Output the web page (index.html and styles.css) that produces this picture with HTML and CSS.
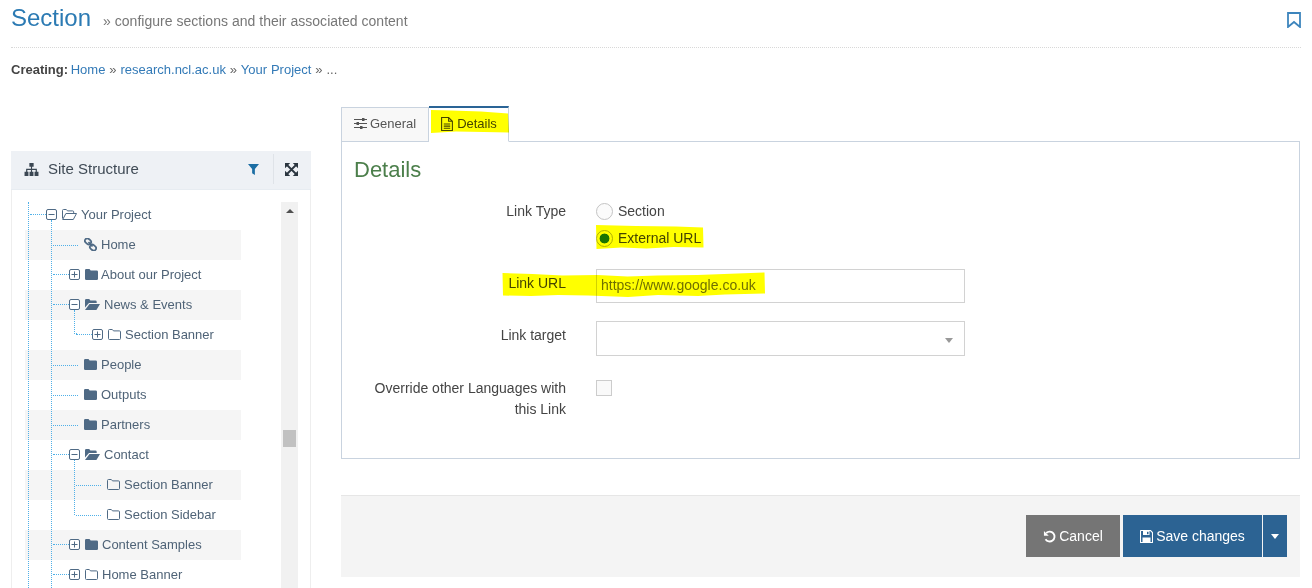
FILE: index.html
```html
<!DOCTYPE html>
<html lang="en">
<head>
<meta charset="utf-8">
<title>Section</title>
<link rel="stylesheet" href="styles.css">
</head>
<body>
<svg class="defs" width="0" height="0" aria-hidden="true">
  <symbol id="i-folder" viewBox="0 0 13 11"><path d="M1.300 0h3.200l1.200 1.400h6a1.300 1.300 0 0 1 1.300 1.300v7A1.300 1.300 0 0 1 11.700 11H1.300A1.300 1.300 0 0 1 0 9.700V1.300A1.300 1.300 0 0 1 1.300 0z" fill="currentColor"/></symbol>
  <symbol id="i-folder-o" viewBox="0 0 13 11"><path d="M1.500.5h2.800l1.200 1.400h6a1 1 0 0 1 1 1v6.600a1 1 0 0 1-1 1h-10a1 1 0 0 1-1-1V1.500a1 1 0 0 1 1-1z" fill="none" stroke="currentColor"/></symbol>
  <symbol id="i-open" viewBox="0 0 15 11"><path d="M0 8.500V1.300A1.300 1.300 0 0 1 1.300 0h2.900l1.200 1.400h5a1.300 1.300 0 0 1 1.300 1.300V4H4L0 8.500z" fill="currentColor"/><path d="M4.500 5H15l-3.600 6H0z" fill="currentColor"/></symbol>
  <symbol id="i-open-o" viewBox="0 0 15 11"><path d="M.5 9.500V1.500a1 1 0 0 1 1-1h2.800l1.200 1.400h5.200a1 1 0 0 1 1 1V4.500M.7 10.500l3.200-6H14.500l-3.200 6z" fill="none" stroke="currentColor" stroke-linejoin="round"/></symbol>
  <symbol id="i-link" viewBox="0 0 13 13"><g fill="none" stroke="currentColor" stroke-width="1.800"><rect x=".7" y="1" width="6.600" height="4.800" rx="2.400" transform="rotate(40 4 3.400)"/><rect x="5.700" y="7.200" width="6.600" height="4.800" rx="2.400" transform="rotate(40 9 9.600)"/><path d="M4.500 4l4 4.500"/></g></symbol>
  <symbol id="i-plus" viewBox="0 0 11 11"><rect x=".5" y=".5" width="10" height="10" rx="1.500" fill="#fff" stroke="currentColor"/><path d="M2.500 5.500h6M5.500 2.500v6" stroke="currentColor"/></symbol>
  <symbol id="i-minus" viewBox="0 0 11 11"><rect x=".5" y=".5" width="10" height="10" rx="1.500" fill="#fff" stroke="currentColor"/><path d="M2.500 5.500h6" stroke="currentColor"/></symbol>
</svg>

<header class="page-head">
  <h1 class="page-title">Section</h1>
  <span class="page-sub">» configure sections and their associated content</span>
  <svg class="bookmark" viewBox="0 0 14 16"><path d="M1 1h12v14L7 10l-6 5z" fill="none" stroke="currentColor" stroke-width="1.800"/></svg>
</header>

<p class="crumbs"><b>Creating:</b> <a href="#">Home</a> » <a href="#">research.ncl.ac.uk</a> » <a href="#">Your Project</a> » ...</p>

<main class="layout">
  <aside class="panel">
    <div class="panel-head">
      <svg class="ico-site" viewBox="0 0 16 14"><path d="M5.700 0h4.600v4H8.600v2.300h5.200V9.500H15.500V14h-4.200V9.500h1.200V7.500H8.600v2H10.100V14H5.900V9.500H7.400v-2H3.500v2H4.700V14H.5V9.500H2.200V6.300h5.200V4H5.700z" fill="currentColor"/></svg>
      <span class="panel-title">Site Structure</span>
      <svg class="ico-filter" viewBox="0 0 12 12"><path d="M0 0h12L7.500 5.500V12L4.500 10V5.500z" fill="currentColor"/></svg>
      <span class="panel-sep"></span>
      <svg class="ico-expand" viewBox="0 0 13 13"><path d="M0 0h5.200L0 5.200zM13 0v5.200L7.800 0zM0 13V7.800L5.200 13zM13 13H7.800L13 7.800z" fill="currentColor"/><path d="M2 2l9 9M11 2l-9 9" stroke="currentColor" stroke-width="1.800" fill="none"/></svg>
    </div>
    <div class="panel-body">
      <div class="tree">
        <span class="guide g1"></span>
        <span class="guide g2"></span>
        <span class="guide g3"></span>
        <span class="guide g4"></span>
        <ul class="tree-list">
          <li class="row d0"><i class="conn"></i><svg class="box"><use href="#i-minus"/></svg><svg class="ic ic-w"><use href="#i-open-o"/></svg><span class="lbl m4">Your Project</span></li>
          <li class="row d1"><i class="conn long"></i><svg class="ic ic-leaf ic-link"><use href="#i-link"/></svg><span class="lbl m4">Home</span></li>
          <li class="row d1"><i class="conn"></i><svg class="box"><use href="#i-plus"/></svg><svg class="ic"><use href="#i-folder"/></svg><span class="lbl m3">About our Project</span></li>
          <li class="row d1"><i class="conn"></i><svg class="box"><use href="#i-minus"/></svg><svg class="ic ic-w"><use href="#i-open"/></svg><span class="lbl m4">News &amp; Events</span></li>
          <li class="row d2"><i class="conn"></i><svg class="box"><use href="#i-plus"/></svg><svg class="ic"><use href="#i-folder-o"/></svg><span class="lbl m4">Section Banner</span></li>
          <li class="row d1"><i class="conn long"></i><svg class="ic ic-leaf"><use href="#i-folder"/></svg><span class="lbl m4">People</span></li>
          <li class="row d1"><i class="conn long"></i><svg class="ic ic-leaf"><use href="#i-folder"/></svg><span class="lbl m4">Outputs</span></li>
          <li class="row d1"><i class="conn long"></i><svg class="ic ic-leaf"><use href="#i-folder"/></svg><span class="lbl m4">Partners</span></li>
          <li class="row d1"><i class="conn"></i><svg class="box"><use href="#i-minus"/></svg><svg class="ic ic-w"><use href="#i-open"/></svg><span class="lbl m4">Contact</span></li>
          <li class="row d2b"><i class="conn long"></i><svg class="ic ic-leaf"><use href="#i-folder-o"/></svg><span class="lbl m4">Section Banner</span></li>
          <li class="row d2b"><i class="conn long"></i><svg class="ic ic-leaf"><use href="#i-folder-o"/></svg><span class="lbl m4">Section Sidebar</span></li>
          <li class="row d1"><i class="conn"></i><svg class="box"><use href="#i-plus"/></svg><svg class="ic"><use href="#i-folder"/></svg><span class="lbl m4">Content Samples</span></li>
          <li class="row d1"><i class="conn"></i><svg class="box"><use href="#i-plus"/></svg><svg class="ic"><use href="#i-folder-o"/></svg><span class="lbl m4">Home Banner</span></li>
        </ul>
      </div>
      <div class="scrollbar">
        <span class="scroll-up"></span>
        <span class="scroll-thumb"></span>
      </div>
    </div>
  </aside>

  <section class="content">
    <nav class="tabs">
      <a class="tab" href="#">
        <svg class="ico-tab" viewBox="0 0 13 11"><path d="M0 1.500h13M0 5.500h13M0 9.500h13" stroke="currentColor" fill="none"/><rect x="8" y="0" width="2.500" height="3" fill="currentColor"/><rect x="2.500" y="4" width="2.500" height="3" fill="currentColor"/><rect x="6" y="8" width="2.500" height="3" fill="currentColor"/></svg>
        General
      </a>
      <a class="tab tab-active" href="#">
        <svg class="ico-doc" viewBox="0 0 11 13"><path d="M.5.500h6.500l3.500 3.500v8.500H.5zM7 .5V4h3.500M2.500 6.500h6M2.500 8.500h6M2.500 10.500h6" fill="none" stroke="currentColor"/></svg>
        Details
      </a>
    </nav>
    <div class="tab-pane">
      <h2 class="pane-title">Details</h2>
      <div class="form">
        <div class="form-label lt">Link Type</div>
        <div class="radios">
          <div class="radio-line"><span class="radio"></span>Section</div>
          <div class="radio-line"><span class="radio radio-on"></span>External URL</div>
        </div>
        <div class="form-label lu">Link URL</div>
        <div class="field">https://www.google.co.uk</div>
        <div class="form-label ls">Link target</div>
        <div class="field field-select"><span class="select-caret"></span></div>
        <div class="form-label lo">Override other Languages with this Link</div>
        <div><span class="check"></span></div>
      </div>
    </div>
    <div class="actions">
      <button class="btn btn-cancel" type="button">
        <svg class="ico-btn" viewBox="0 0 14 14"><path d="M3.500 3.200A5.300 5.300 0 1 1 2.700 10" fill="none" stroke="currentColor" stroke-width="2"/><path d="M1 1v5.200h5.200z" fill="currentColor"/></svg>
        Cancel
      </button>
      <div class="split">
        <button class="btn btn-save" type="button">
          <svg class="ico-btn" viewBox="0 0 13 13"><path d="M1 .5h9.500l2 2V12a.5.500 0 0 1-.5.500H1a.5.500 0 0 1-.5-.5V1A.5.500 0 0 1 1 .5z" fill="none" stroke="currentColor" stroke-width="1.100"/><path d="M3 1h6.500v4H3zM2.500 7.500h8v5h-8z" fill="currentColor"/><rect x="7" y="1.800" width="1.500" height="2.400" fill="#2c6393"/></svg>
          Save changes
        </button>
        <button class="btn btn-caret" type="button" aria-label="More"><span class="caret"></span></button>
      </div>
    </div>
  </section>
</main>

<svg class="marks" width="1312" height="588" viewBox="0 0 1312 588" aria-hidden="true">
  <path d="M431 110l20 .5 30 1 27 2 1 19-25-.5-28-.5-25 1.500z"/>
  <path d="M596 225l40 1 40 .5 27 1 .5 20-30-.5-27 1.500-25-1-25 1.500z"/>
  <path d="M502.500 273l30 1 30 1.500 35-.5 30 1.500 30-1 40-.5 67-2.500.5 21-40 1-27 1.500-40-1-30 2-40-1.500-30-.5-27 1-28-.5z"/>
</svg>
</body>
</html>
```
FILE: styles.css
```css
* { box-sizing: border-box; }
html, body { margin: 0; height: 588px; overflow: hidden; background: #fff; }
body { font: 14px/20px "Liberation Sans", Arial, sans-serif; color: #333; position: relative; }
a { color: inherit; text-decoration: none; }
.defs { position: absolute; }

.page-head { display: flex; align-items: center; margin: 0 11px; height: 48px; padding-bottom: 11px; border-bottom: 1px dotted #d8d8d8; }
.page-title { margin: 0; font-size: 24px; font-weight: 400; line-height: 36px; color: #2b7ab3; }
.page-sub { margin-left: 12px; margin-top: 5px; color: #777; letter-spacing: .02px; }
.bookmark { width: 14px; height: 16px; margin-left: auto; margin-top: 3px; color: #3d85bd; }

.crumbs { margin: 12px 11px 20px; font-size: 13px; line-height: 20px; color: #666; height: 26px; word-spacing: .3px; }
.crumbs b { color: #444; margin-right: -1.300px; }
.crumbs a { color: #337ab7; }

.layout { display: flex; align-items: flex-start; gap: 30px; padding-left: 11px; }

.panel { width: 300px; margin-top: 45px; }
.panel-head { display: flex; align-items: center; height: 39px; padding: 0 13px 2px; background: #eef1f5; border-bottom: 1px solid #e7ecf1; }
.ico-site { width: 15px; height: 13px; color: #3b4753; margin-right: 9px; }
.panel-title { font-size: 15px; color: #3f4a55; flex: 1; }
.ico-filter { width: 11px; height: 11px; color: #1c6ea4; }
.panel-sep { width: 1px; height: 30px; background: #dfe3e8; margin: 0 11px 0 14px; }
.ico-expand { width: 13px; height: 13px; color: #2b3640; }

.panel-body { display: flex; align-items: flex-start; height: 398px; overflow: hidden; padding: 10px 0 0 13px; border: 1px solid #eee; border-width: 0 1px; }
.tree { position: relative; width: 216px; height: 388px; }
.tree-list { list-style: none; margin: 0; padding: 0; }
.guide { position: absolute; width: 0; border-left: 1px dotted #4fb0e8; }
.g1 { left: 3px; top: 2px; height: 386px; }
.g2 { left: 26px; top: 20px; height: 368px; }
.g3 { left: 49px; top: 110px; height: 24px; border-bottom: 1px dotted #4fb0e8; width: 3px; }
.g4 { left: 49px; top: 260px; height: 55px; }

.row { display: flex; align-items: center; height: 30px; padding-bottom: 2px; font-size: 13px; color: #4f6377; }
.row:nth-child(even) { background: #f5f5f5; }
.d0 { padding-left: 5px; }
.d1 { padding-left: 28px; }
.d2 { padding-left: 51px; }
.d2b { padding-left: 51px; }
.conn { display: block; flex: none; width: 16px; height: 0; border-top: 1px dotted #4fb0e8; }
.conn.long { width: 25px; margin-top: 2px; }
.box { flex: none; width: 11px; height: 11px; color: #4f6a85; margin-top: 1px; }
.ic { flex: none; width: 13px; height: 11px; margin-left: 5px; color: #4f6a85; }
.ic-w { width: 15px; }
.ic-leaf { margin-left: 6px; }
.ic-link { height: 13px; }
.lbl { white-space: nowrap; margin-top: 2px; }
.m3 { margin-left: 3px; }
.m4 { margin-left: 4px; }

.scrollbar { position: relative; flex: none; margin: 2px 0 0 40px; width: 17px; height: 386px; background: #f1f1f1; }
.scroll-up { position: absolute; left: 5px; top: 7px; border: 4px solid transparent; border-top: 0; border-bottom: 4px solid #505050; }
.scroll-thumb { position: absolute; left: 2px; top: 228px; width: 13px; height: 17px; background: #c1c1c1; }

.content { width: 959px; }
.tabs { display: flex; align-items: flex-end; height: 36px; margin-bottom: -1px; position: relative; }
.tab { display: flex; align-items: center; justify-content: center; gap: 3px; height: 35px; padding-bottom: 2px; width: 88px; font-size: 13px; color: #555; background: #f8f8f8; border: 1px solid #c9d3df; }
.tab-active { width: 80px; height: 36px; gap: 4px; padding-left: 1px; background: #fff; border-color: #c9d3df; border-top: 2px solid #2a6496; border-bottom-color: #fff; border-left: 0; color: #444; }
.ico-tab { width: 13px; height: 11px; color: #555; }
.ico-doc { width: 12px; height: 14px; color: #444; }
.tab-pane { height: 318px; border: 1px solid #c9d3df; padding: 13px 12px 0; }
.pane-title { margin: 0; font-size: 22px; line-height: 30px; font-weight: 400; color: #4c7f4b; }
.form { display: grid; grid-template-columns: 212px 369px; column-gap: 30px; margin-top: 12px; font-size: 14px; color: #444; }
.form-label { text-align: right; padding-left: 15px; line-height: 21px; }
.lt { padding-top: 4px; }
.lu { margin-top: 18px; padding-top: 4px; }
.ls { margin-top: 18px; padding-top: 4px; }
.lo { margin-top: 22px; }
.radios { display: flex; flex-direction: column; }
.radio-line { display: flex; align-items: center; height: 27px; gap: 5px; padding-top: 1px; color: #444; }
.radio { width: 17px; height: 17px; border-radius: 50%; border: 1px solid #c4c4c4; background: #fbfbfb; flex: none; }
.radio-on { background: radial-gradient(circle, #1c7400 0 4.700px, #fff 5.200px); border-color: #b0b0b0; }
.field { height: 34px; margin-top: 18px; border: 1px solid #d2d2d2; padding: 0 4px; line-height: 30px; color: #707070; }
.field-select { height: 35px; display: flex; align-items: center; justify-content: flex-end; padding-right: 11px; }
.select-caret { border: 4px solid transparent; border-bottom: 0; border-top: 5px solid #999; margin-top: 3px; }
.check { display: block; width: 16px; height: 16px; margin-top: 24px; border: 1px solid #ccc; background: #f9f9f9; }

.actions { display: flex; justify-content: flex-end; align-items: center; gap: 3px; height: 82px; margin-top: 36px; padding: 0 13px 1px 0; background: #f4f4f4; border-top: 1px solid #e6e6e6; }
.btn { display: flex; align-items: center; justify-content: center; gap: 3px; height: 42px; border: 0; padding: 0; color: #fff; font: 14px "Liberation Sans", Arial, sans-serif; }
.btn-cancel { width: 94px; background: #757575; }
.split { display: flex; gap: 1px; }
.btn-save { width: 139px; background: #2c6393; }
.btn-caret { width: 24px; background: #2c6393; }
.caret { border: 4px solid transparent; border-bottom: 0; border-top: 5px solid #fff; }
.ico-btn { width: 13px; height: 13px; }

.marks { position: absolute; left: 0; top: 0; pointer-events: none; mix-blend-mode: multiply; fill: #ffff00; }
```
